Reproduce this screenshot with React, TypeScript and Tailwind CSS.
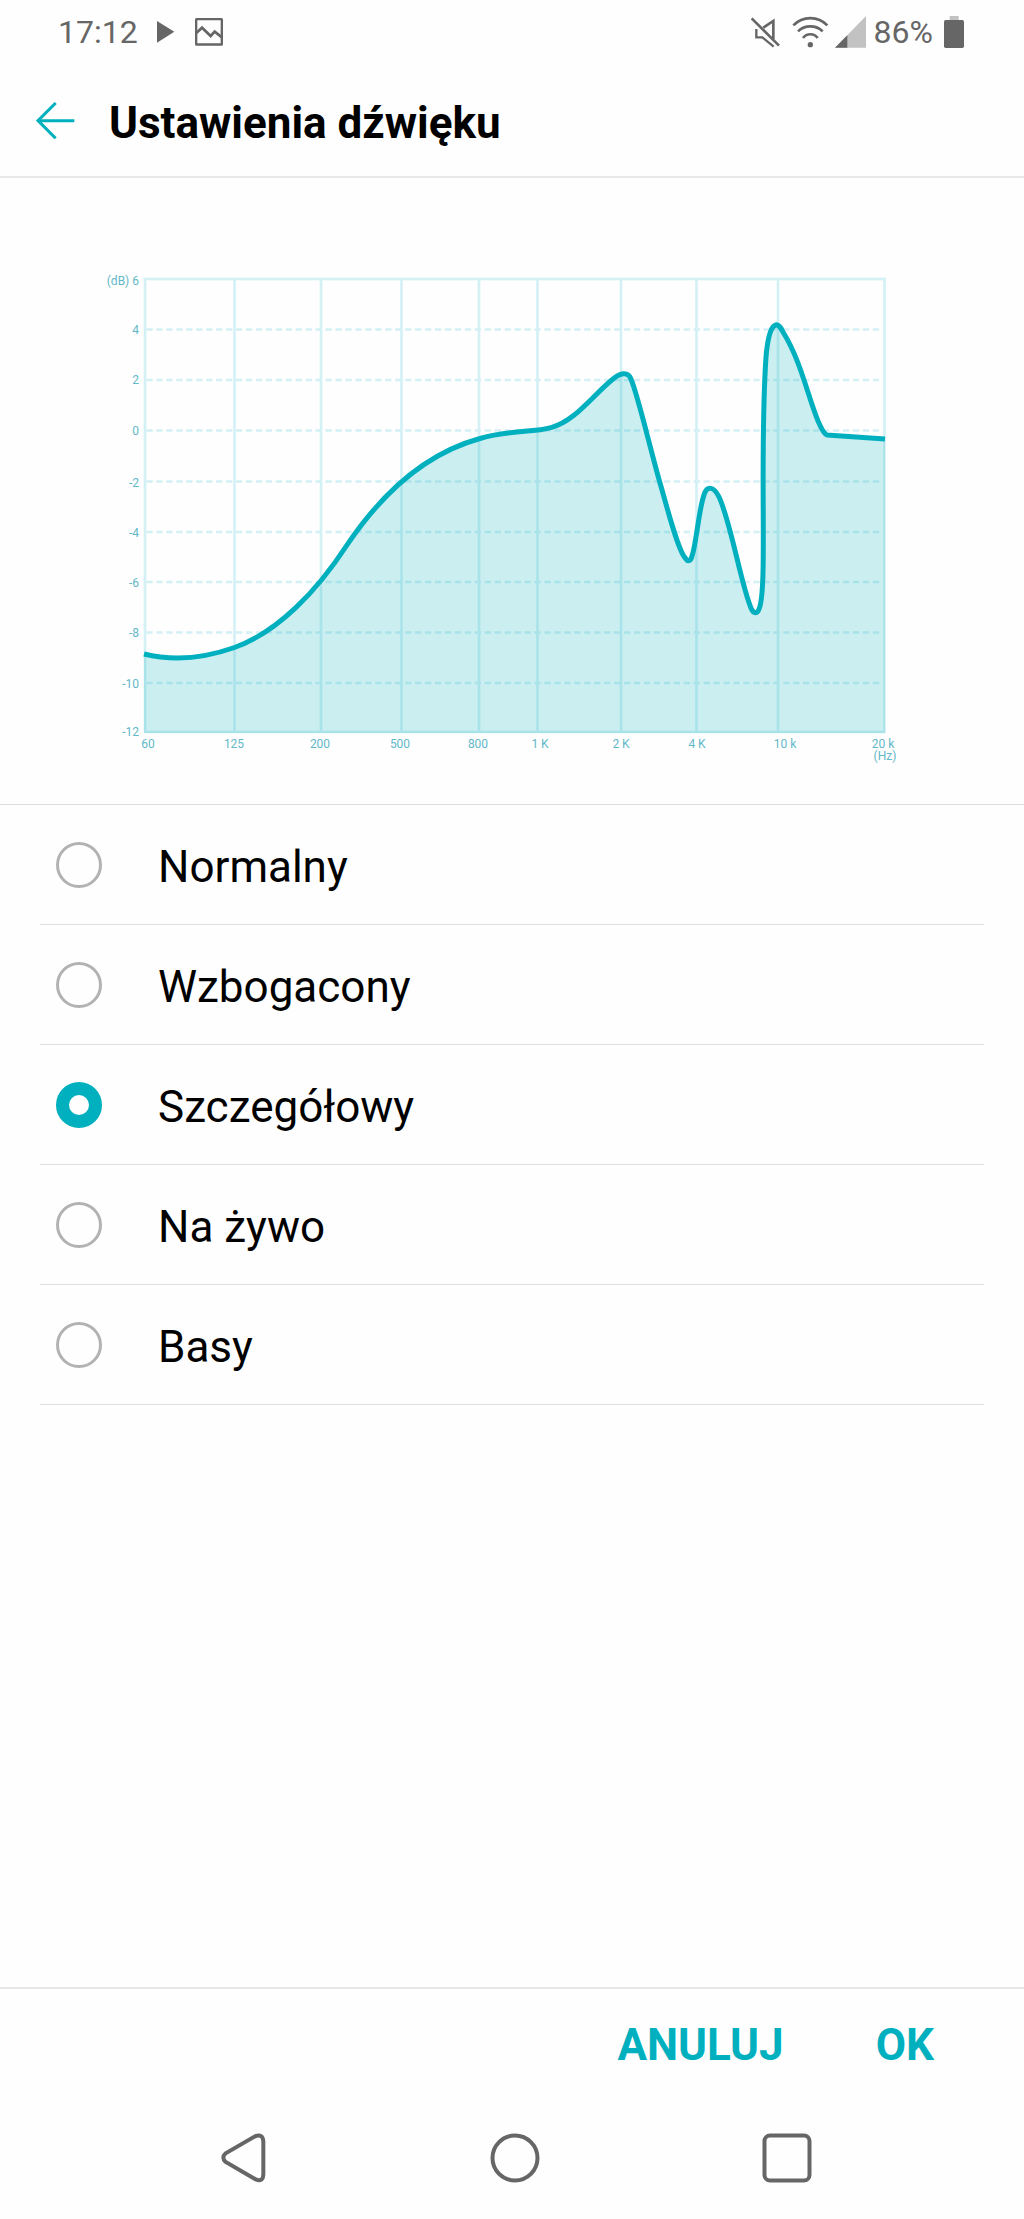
import React from 'react';
import { clsx } from 'clsx';

interface Preset {
  id: string;
  label: string;
}

interface Tick {
  label: string;
  line: number;
  text: number;
}

const presets: Preset[] = [
  { id: 'normal', label: 'Normalny' },
  { id: 'enhanced', label: 'Wzbogacony' },
  { id: 'detailed', label: 'Szczegółowy' },
  { id: 'live', label: 'Na żywo' },
  { id: 'bass', label: 'Basy' },
];

const dbTicks: Tick[] = [
  { label: '(dB) 6', line: 279, text: 285 },
  { label: '4', line: 329.5, text: 334 },
  { label: '2', line: 380, text: 384 },
  { label: '0', line: 430.5, text: 435 },
  { label: '-2', line: 481.5, text: 487 },
  { label: '-4', line: 532, text: 537 },
  { label: '-6', line: 582, text: 587 },
  { label: '-8', line: 632.5, text: 637 },
  { label: '-10', line: 683, text: 688 },
  { label: '-12', line: 732, text: 736 },
];

const hzTicks: Tick[] = [
  { label: '60', line: 145, text: 148 },
  { label: '125', line: 234.5, text: 234 },
  { label: '200', line: 321, text: 320 },
  { label: '500', line: 401.5, text: 400 },
  { label: '800', line: 479, text: 478 },
  { label: '1 K', line: 537.5, text: 540 },
  { label: '2 K', line: 621, text: 621 },
  { label: '4 K', line: 696.5, text: 697 },
  { label: '10 k', line: 778, text: 785 },
  { label: '20 k', line: 884.5, text: 883 },
];

const curve =
  'M144 654C156 657 167 658 178 658C198 658 216 654 234.5 647.5C278 632 317 591 347 545' +
  'C374 505 416 456 480 438.5' +
  'C498 433 518 432 537.7 430C543 429.5 547 428.5 551.7 427.3C575 421 592 396 613 379' +
  'C620 373 628 371 631 379C638 396 648 440 660 483C666 503 678 552 686 559' +
  'C688 562 691 561 692 556C696 546 699 508 704 495C707 485 714 487 718.5 496' +
  'C730 518 741 585 751 608C753 613 757 615 759 609C768 590 759 460 766 357' +
  'C769 322 777 319 783 332C801 361 808 397 818 421C821 428 824 434 827 435L885 439';

const EqualizerChart: React.FC = () => (
  <svg viewBox="0 178 1024 626" className="block h-auto w-full" role="img">
    {/* Grid */}
    <g stroke="#d3f0f5" strokeWidth="2.6" fill="none">
      <rect x="145" y="279" width="739.5" height="453" />
      {hzTicks.slice(1, -1).map((tick) => (
        <line key={tick.label} x1={tick.line} x2={tick.line} y1="279" y2="732" />
      ))}
      {dbTicks.slice(1, -1).map((tick) => (
        <line
          key={tick.label}
          x1="146.4"
          x2="880"
          y1={tick.line}
          y2={tick.line}
          strokeDasharray="6.3 3.65"
        />
      ))}
    </g>

    {/* Response curve */}
    <path d={`${curve}V733H144Z`} fill="#00b0be" fillOpacity="0.2" />
    <path d={curve} fill="none" stroke="#00b0be" strokeWidth="5" strokeLinejoin="round" />

    {/* Axis labels */}
    <g fill="#62b8c8" className="text-[12px]">
      {dbTicks.map((tick) => (
        <text key={tick.label} x="139" y={tick.text} textAnchor="end">
          {tick.label}
        </text>
      ))}
      {hzTicks.map((tick) => (
        <text key={tick.label} x={tick.text} y="748" textAnchor="middle">
          {tick.label}
        </text>
      ))}
      <text x="885" y="760" textAnchor="middle">
        (Hz)
      </text>
    </g>
  </svg>
);

const StatusBar: React.FC = () => (
  <div className="flex h-16 items-center justify-between pr-[60px] pl-[58px] text-[32px] leading-none text-[#666]">
    <div className="flex items-center">
      <span>17:12</span>
      <svg viewBox="471 63 54 66" className="ml-[19px] h-[22px] w-[18px]" fill="currentColor">
        <path d="M471 63L523 95.5L471 128Z" />
      </svg>
      <svg viewBox="585 54 84 84" className="ml-5 size-7" fill="none" stroke="currentColor" strokeWidth="7">
        <rect x="588.5" y="57.5" width="77" height="76" rx="1" />
        <path d="M589 99L606 83L632 108L644 95L666 112" strokeWidth="8" />
      </svg>
    </div>
    <div className="flex items-center">
      <svg viewBox="148 46 87 93" className="h-[31px] w-[29px]" fill="none" stroke="currentColor">
        <path d="M150 50L232 132" strokeWidth="8" />
        <path d="M185 78L215 58V112" strokeWidth="8" />
        <path d="M164 82V107H182L216 135" strokeWidth="7" />
      </svg>
      <svg viewBox="270 48 111 96" className="ml-3 h-8 w-[37px]" fill="none" stroke="currentColor" strokeWidth="8">
        <path d="M274 76C302 47 348 47 376 76" />
        <path d="M288 94C308 74 342 74 362 94" />
        <path d="M303 114C314 99 336 99 347 114" />
        <circle cx="325" cy="134" r="8" fill="currentColor" stroke="none" />
      </svg>
      <svg viewBox="398 48 93 96" className="ml-1.5 h-8 w-[31px]">
        <path d="M398 143L491 48V143Z" fill="#c2c2c2" />
        <path d="M398 143L435 106V143Z" fill="currentColor" />
      </svg>
      <span className="ml-2">86%</span>
      <svg viewBox="730 47 60 96" className="ml-[11px] h-8 w-5">
        <rect x="747" y="47" width="27" height="14" fill="#c2c2c2" />
        <rect x="730" y="59" width="60" height="84" rx="5" fill="currentColor" />
      </svg>
    </div>
  </div>
);

const NavigationBar: React.FC = () => (
  <nav className="grid h-[122px] grid-cols-3 items-center justify-items-center pr-[101px] pl-[107px] text-[#666]">
    <button type="button" aria-label="Wstecz">
      <svg viewBox="180 520 135 150" className="h-[50px] w-[45px]" fill="none" stroke="currentColor" strokeWidth="12">
        <path d="M284 529L194 581Q180 594 194 607L284 659Q307 668 307 643V545Q305 522 284 529Z" />
      </svg>
    </button>
    <button type="button" aria-label="Ekran główny">
      <svg viewBox="0 0 50 50" className="size-[50px]" fill="none" stroke="currentColor" strokeWidth="4">
        <circle cx="25" cy="25" r="22.5" />
      </svg>
    </button>
    <button type="button" aria-label="Ostatnie">
      <svg viewBox="0 0 50 50" className="size-[50px]" fill="none" stroke="currentColor" strokeWidth="4">
        <rect x="2.5" y="2.5" width="45" height="45" rx="5.5" />
      </svg>
    </button>
  </nav>
);

const App: React.FC = () => {
  const [selected, setSelected] = React.useState('detailed');

  return (
    <div className="flex min-h-screen flex-col bg-[#fefefe] font-['Roboto',sans-serif] text-black">
      <StatusBar />

      <header className="flex h-[114px] items-center border-b-2 border-[#e8e8e8] pl-9">
        <button type="button" aria-label="Wróć" className="text-[#00b0be]">
          <svg viewBox="107 308 117 111" className="h-[37px] w-[39px]" fill="none" stroke="currentColor" strokeWidth="9">
            <path d="M222 364H114" />
            <path d="M166 311L113 364L166 417" />
          </svg>
        </button>
        <h1 className="ml-[34px] pt-1.5 text-[44px] leading-none font-bold">Ustawienia dźwięku</h1>
      </header>

      <main className="flex-1">
        <section className="border-b border-[#dcdcdc]">
          <EqualizerChart />
        </section>

        <fieldset className="px-10">
          {presets.map((preset) => (
            <label
              key={preset.id}
              className="flex h-[120px] items-center gap-14 border-b border-[#e0e0e0] pl-4"
            >
              <input
                type="radio"
                name="preset"
                value={preset.id}
                checked={selected === preset.id}
                onChange={() => setSelected(preset.id)}
                className={clsx(
                  'size-[46px] shrink-0 appearance-none rounded-full',
                  selected === preset.id ? 'border-[13px] border-[#00b0be]' : 'border-3 border-[#b2b2b2]'
                )}
              />
              <span className="pt-1 text-[44px] leading-none">{preset.label}</span>
            </label>
          ))}
        </fieldset>
      </main>

      <footer className="border-t-2 border-[#e8e8e8]">
        <div className="flex h-[108px] items-center justify-end gap-[92px] pt-1 pr-[90px] text-[44px] leading-none font-bold text-[#00b0be]">
          <button type="button">ANULUJ</button>
          <button type="button">OK</button>
        </div>
        <NavigationBar />
      </footer>
    </div>
  );
};

export default App;
